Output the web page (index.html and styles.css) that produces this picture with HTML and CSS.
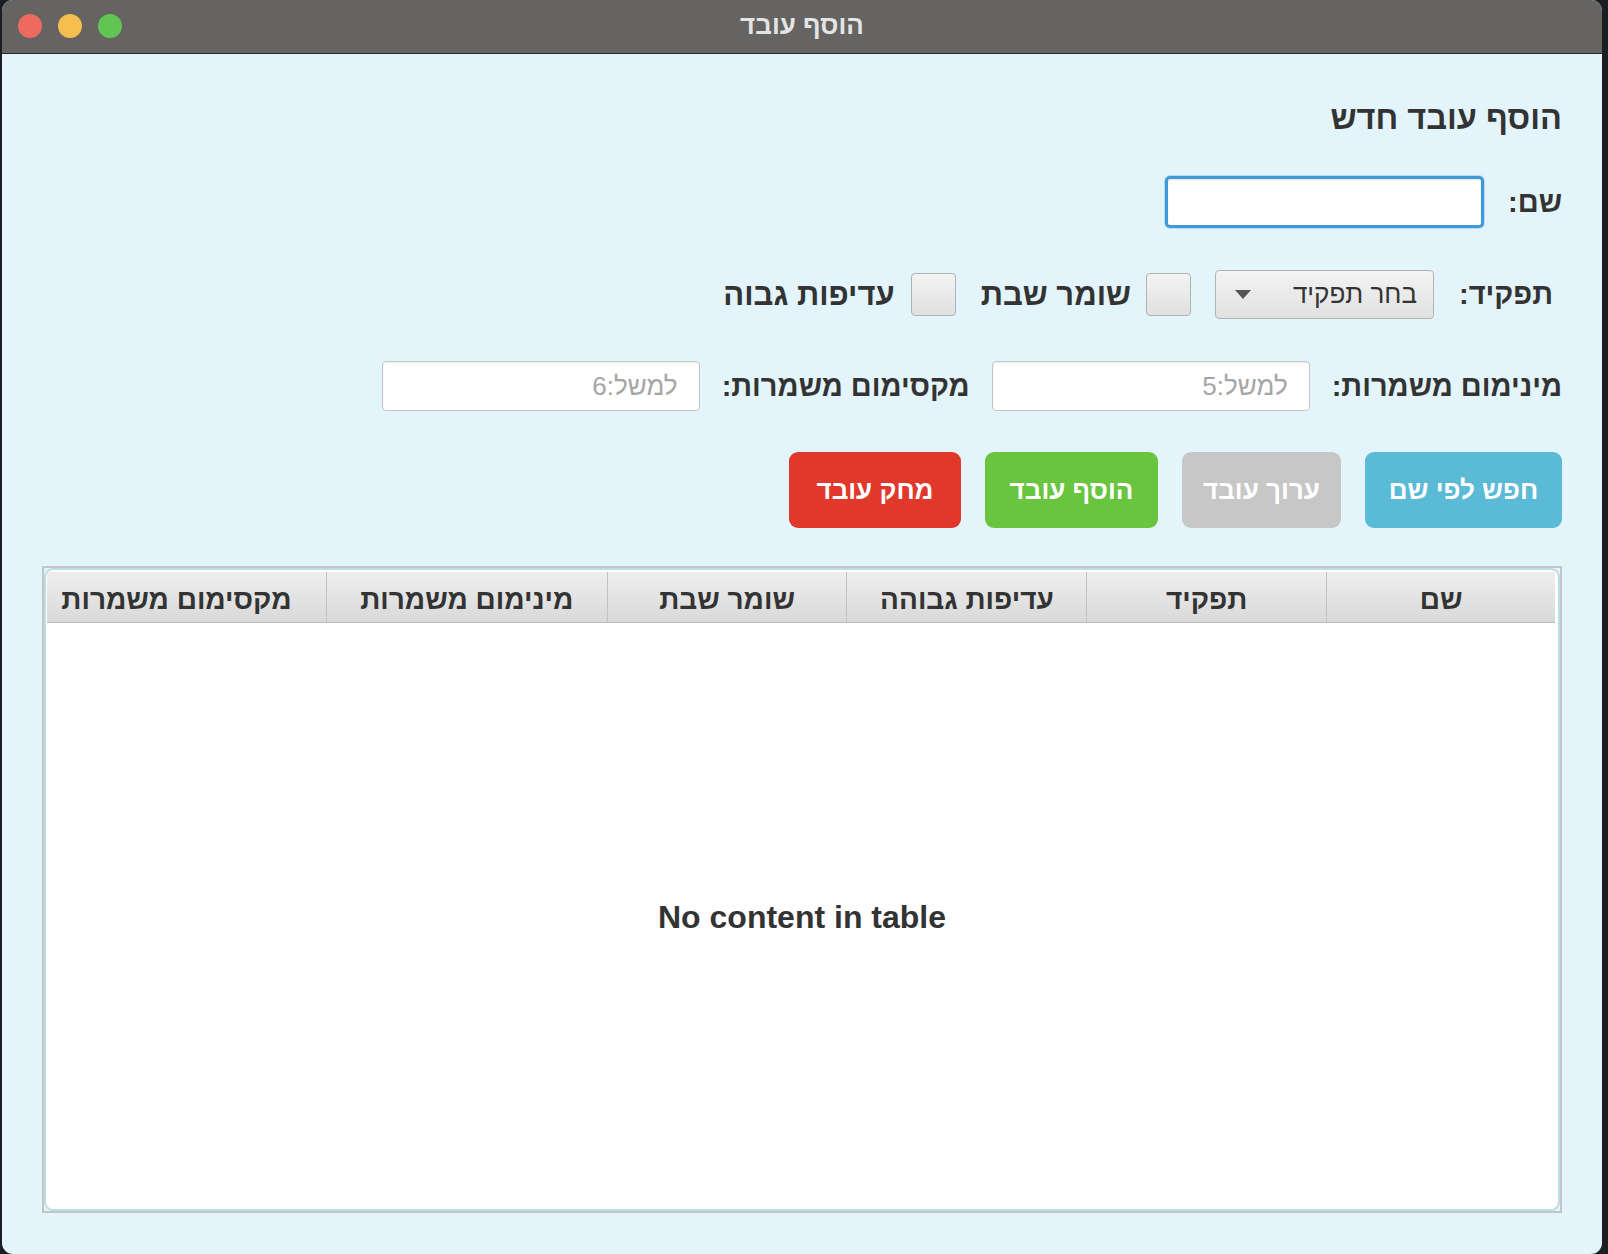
FILE: index.html
```html
<!DOCTYPE html>
<html lang="he" dir="rtl">
<head>
<meta charset="utf-8">
<title>הוסף עובד</title>
<link rel="stylesheet" href="styles.css">
</head>
<body>
<div class="window">
  <div class="titlebar">
    <div class="lights">
      <span class="light red"></span>
      <span class="light yellow"></span>
      <span class="light green"></span>
    </div>
    <div class="title">הוסף עובד</div>
  </div>
  <div class="content">
    <div class="row heading-row">
      <h1 class="heading">הוסף עובד חדש</h1>
    </div>
    <div class="row name-row">
      <label class="label">שם:</label>
      <div class="input focused"></div>
    </div>
    <div class="row role-row">
      <label class="label role-label">תפקיד:</label>
      <div class="combo">
        <span class="combo-text">בחר תפקיד</span>
        <span class="combo-arrow"></span>
      </div>
      <span class="checkbox cb-first"></span>
      <label class="label cb-label">שומר שבת</label>
      <span class="checkbox cb-second"></span>
      <label class="label cb-label">עדיפות גבוה</label>
    </div>
    <div class="row shifts-row">
      <label class="label">מינימום משמרות:</label>
      <div class="input field"><span class="placeholder">למשל:5</span></div>
      <label class="label">מקסימום משמרות:</label>
      <div class="input field"><span class="placeholder">למשל:6</span></div>
    </div>
    <div class="row buttons-row">
      <button class="btn btn-blue">חפש לפי שם</button>
      <button class="btn btn-gray">ערוך עובד</button>
      <button class="btn btn-green">הוסף עובד</button>
      <button class="btn btn-red">מחק עובד</button>
    </div>
    <div class="table-frame">
      <div class="table">
        <div class="thead">
          <div class="th c1">שם</div>
          <div class="th c2">תפקיד</div>
          <div class="th c3">עדיפות גבוהה</div>
          <div class="th c4">שומר שבת</div>
          <div class="th c5">מינימום משמרות</div>
          <div class="th c6">מקסימום משמרות</div>
        </div>
        <div class="tbody">
          <div class="empty" dir="ltr">No content in table</div>
        </div>
      </div>
    </div>
  </div>
</div>
</body>
</html>
```
FILE: styles.css
```css
html, body {
  margin: 0;
  padding: 0;
  height: 100%;
}
body {
  background: #1b1f22;
  font-family: "Liberation Sans", Arial, sans-serif;
  color: #333333;
  overflow: hidden;
}
.window {
  margin-right: 6px;
  margin-left: 2px;
  width: 1600px;
  height: 1254px;
  border-radius: 11px;
  overflow: hidden;
  display: flex;
  flex-direction: column;
  background: #e3f5fa;
}
.titlebar {
  height: 53px;
  flex: 0 0 53px;
  background: #656462;
  border-bottom: 1px solid #2a2a2a;
  position: relative;
  display: flex;
  align-items: center;
  justify-content: center;
}
.lights {
  position: absolute;
  left: 16px;
  top: 14px;
  display: flex;
  direction: ltr;
  gap: 16px;
}
.light {
  width: 24px;
  height: 24px;
  border-radius: 50%;
  display: block;
}
.red { background: #ed6a5e; }
.yellow { background: #f5bf4f; }
.green { background: #61c554; }
.title {
  color: #e4e4e4;
  font-weight: bold;
  font-size: 26px;
  margin-top: -2px;
}
.content {
  flex: 1;
  padding: 0 40px 0 40px;
  display: flex;
  flex-direction: column;
}
.row {
  display: flex;
  align-items: center;
}
.heading-row {
  margin-top: 44px;
  height: 40px;
}
.heading {
  margin: 0;
  font-size: 32.5px;
  font-weight: bold;
  color: #333333;
}
.label {
  font-size: 29px;
  font-weight: bold;
  color: #333333;
  white-space: nowrap;
}
.name-row {
  margin-top: 38px;
  height: 52px;
  gap: 24px;
}
.input {
  width: 316px;
  height: 48px;
  background: #ffffff;
  border: 1px solid #c6c6c6;
  border-radius: 4px;
  box-shadow: inset 0 1px 2px rgba(0,0,0,0.08);
  display: flex;
  align-items: center;
  box-sizing: border-box;
}
.input.focused {
  width: 319px;
  height: 52px;
  border: 3px solid #3f9ad9;
  border-radius: 5px;
  box-shadow: 0 0 0 1px #b8dcef, inset 0 1px 2px rgba(0,0,0,0.1);
}
.field {
  width: 318px;
  height: 50px;
  padding-right: 21px;
}
.placeholder {
  color: #a5a5a5;
  font-size: 26px;
}
.role-row {
  margin-top: 42px;
  height: 49px;
}
.role-label {
  margin-right: 9px;
  margin-left: 25px;
}
.combo {
  width: 219px;
  height: 49px;
  box-sizing: border-box;
  border: 1px solid #b4b4b4;
  border-radius: 4px;
  background: linear-gradient(#f3f3f3, #e1e1e1);
  display: flex;
  align-items: center;
  justify-content: space-between;
  padding: 0 16px 0 19px;
  margin-left: 24px;
}
.combo-text {
  font-size: 26px;
  color: #333333;
}
.combo-arrow {
  width: 0;
  height: 0;
  border-left: 8px solid transparent;
  border-right: 8px solid transparent;
  border-top: 9px solid #555555;
}
.checkbox {
  width: 45px;
  height: 43px;
  box-sizing: border-box;
  border: 1px solid #b2b2b2;
  border-radius: 4px;
  background: linear-gradient(#f3f3f3, #e0e0e0);
  display: block;
}
.cb-first { margin-left: 15px; }
.cb-second { margin-left: 16px; }
.cb-label { margin-left: 25px; font-size: 31px; }
.cb-label:last-child { margin-left: 0; }
.shifts-row {
  margin-top: 42px;
  height: 50px;
  gap: 22px;
}
.buttons-row {
  margin-top: 41px;
  height: 76px;
  gap: 24px;
}
.btn {
  height: 76px;
  border: none;
  border-radius: 9px;
  color: #ffffff;
  font-family: "Liberation Sans", Arial, sans-serif;
  font-weight: bold;
  font-size: 26px;
  padding: 0;
}
.btn-blue { background: #5bbad5; width: 197px; }
.btn-gray { background: #c6c7c6; width: 159px; }
.btn-green { background: #69c43f; width: 173px; }
.btn-red { background: #e0382b; width: 172px; }
.table-frame {
  margin-top: 38px;
  height: 647px;
  box-sizing: border-box;
  border: 2px solid #c5c5c5;
  display: flex;
}
.table {
  flex: 1;
  border: 2px solid #b9dfe5;
  border-radius: 9px;
  background: #ffffff;
  padding: 2px 3px 0 1px;
  display: flex;
  flex-direction: column;
  overflow: hidden;
}
.thead {
  display: flex;
  height: 51px;
  flex: 0 0 51px;
}
.th {
  box-sizing: border-box;
  background: linear-gradient(#eeeeee, #d9d9d9);
  border-left: 1px solid #c2c2c2;
  border-bottom: 1px solid #bdbdbd;
  display: flex;
  align-items: center;
  justify-content: center;
  padding-top: 6px;
  font-size: 28px;
  font-weight: bold;
  color: #333333;
  white-space: nowrap;
}
.th.c6 { border-left: none; padding-right: 20px; }
.c1 { width: 229px; }
.c2 { width: 240px; }
.c3 { width: 240px; }
.c4 { width: 240px; }
.c5 { width: 281px; }
.c6 { width: 279px; }
.tbody {
  flex: 1;
  display: flex;
  align-items: center;
  justify-content: center;
}
.empty {
  font-size: 32px;
  font-weight: bold;
  color: #333333;
  margin-left: 2px;
  margin-top: 2px;
}
```
